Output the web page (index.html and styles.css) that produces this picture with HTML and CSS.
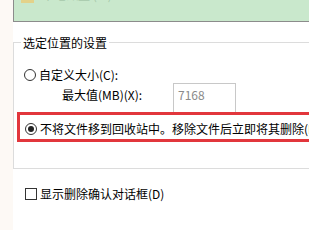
FILE: index.html
```html
<!DOCTYPE html>
<html lang="zh-CN">
<head>
<meta charset="utf-8">
<link rel="stylesheet" href="styles.css">
</head>
<body>
<div class="page">
  <div class="strip"></div>
  <div class="panel">
    <div class="banner">
      <div class="banner-row">
        <span class="drive-icon"></span>
        <span class="banner-text">本地磁盘 (C:)</span>
        <span class="banner-text">59.9 GB</span>
      </div>
    </div>
    <div class="group">
      <span class="legend">选定位置的设置</span>
      <div class="row row-custom">
        <span class="radio"></span>
        <span class="label">自定义大小(C):</span>
      </div>
      <div class="row row-max">
        <span class="label max-label">最大值(MB)(X):</span>
        <div class="input">7168</div>
      </div>
      <div class="highlight">
        <div class="row">
          <span class="radio checked"></span>
          <span class="label nowrap">不将文件移到回收站中。移除文件后立即将其删除(R)。</span>
        </div>
      </div>
    </div>
    <div class="row row-check">
      <span class="checkbox"></span>
      <span class="label">显示删除确认对话框(D)</span>
    </div>
  </div>
</div>
</body>
</html>
```
FILE: styles.css
```css
html, body {
  margin: 0;
  padding: 0;
  background: #ffffff;
  overflow: hidden;
}
body {
  font-family: "Noto Sans CJK SC", "Noto Sans", sans-serif;
  font-size: 12px;
  line-height: 16px;
  color: #000000;
}
.page {
  display: flex;
  width: 309px;
  height: 230px;
  overflow: hidden;
}
.strip {
  width: 13px;
  flex: none;
  background: #fdf9f5;
}
.panel {
  flex: 1;
  min-width: 0;
  background: #ffffff;
}
.banner {
  height: 21px;
  background: #c9e8cc;
  border-left: 1px solid #8c8c8c;
  border-bottom: 1px solid #8c8c8c;
  overflow: hidden;
}
.banner-row {
  display: flex;
  align-items: center;
  gap: 8px;
  margin-top: -13px;
  padding-left: 7px;
}
.drive-icon {
  width: 13px;
  height: 15px;
  background: #e3d28a;
  flex: none;
}
.banner-text {
  color: #a7c8ab;
}
.group {
  margin-top: 20px;
  border: 1px solid #dcdcdc;
  border-right: none;
  padding-bottom: 26px;
}
.legend {
  display: inline-block;
  margin-top: -8px;
  margin-left: 7px;
  padding: 0 2px;
  background: #ffffff;
  vertical-align: top;
}
.row {
  display: flex;
  align-items: center;
}
.row-custom {
  margin-top: 8px;
  padding-left: 10px;
}
.radio {
  width: 10px;
  height: 10px;
  border: 1px solid #333333;
  border-radius: 50%;
  background: #ffffff;
  flex: none;
  margin-right: 3px;
  display: flex;
  align-items: center;
  justify-content: center;
}
.radio.checked::after {
  content: "";
  width: 6px;
  height: 6px;
  border-radius: 50%;
  background: #222222;
}
.nowrap {
  white-space: nowrap;
}
.row-max {
  align-items: flex-start;
  padding-left: 48px;
}
.max-label {
  padding-top: 4px;
  width: 111px;
  flex: none;
}
.input {
  width: 57px;
  flex: none;
  border: 1px solid #c8c8c8;
  border-bottom: none;
  padding: 3px 0 0 4px;
  box-sizing: content-box;
  height: 25px;
  color: #8a8a8a;
}
.highlight {
  margin-left: 3px;
  border: 3px solid #e2363c;
  border-right: none;
  padding: 6px 0 1px 5px;
  height: 17px;
  box-sizing: content-box;
  overflow: hidden;
}
.checkbox {
  width: 10px;
  height: 10px;
  border: 1px solid #333333;
  background: #ffffff;
  flex: none;
  margin-right: 3px;
}
.row-check {
  margin-top: 17px;
  padding-left: 12px;
}
```
